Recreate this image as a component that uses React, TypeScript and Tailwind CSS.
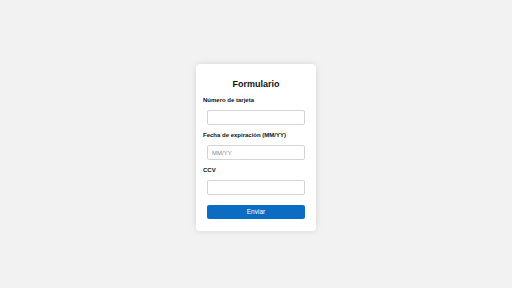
export default function App() {
  return (
    <div className="flex h-[288px] w-full justify-center bg-[#f2f2f2] pt-[64px] font-['Liberation_Sans',Arial,sans-serif]">
      <form
        className="flex h-[167px] w-[120px] flex-col rounded-[4px] bg-white px-[7px] pt-[15px] shadow-[0_0_6px_rgba(0,0,0,0.12)]"
        onSubmit={(e) => e.preventDefault()}
      >
        <h2 className="text-center text-[9px] font-bold leading-[11px] text-[#111]">Formulario</h2>

        <label className="mt-[6px] text-[6px] font-bold leading-[8px] text-[#111]">Número de tarjeta</label>
        <input
          type="text"
          className="ml-[4px] mt-[6px] h-[15px] w-[98px] rounded-[2px] border border-[#d4d4d4] bg-white px-[4px] text-[6px] outline-none"
        />

        <label className="mt-[6px] text-[6px] font-bold leading-[8px] text-[#111]">Fecha de expiración (MM/YY)</label>
        <input
          type="text"
          placeholder="MM/YY"
          className="ml-[4px] mt-[6px] h-[15px] w-[98px] rounded-[2px] border border-[#d4d4d4] bg-white px-[4px] text-[6px] outline-none placeholder:text-[#8a8a8a]"
        />

        <label className="mt-[6px] text-[6px] font-bold leading-[8px] text-[#111]">CCV</label>
        <input
          type="text"
          className="ml-[4px] mt-[6px] h-[15px] w-[98px] rounded-[2px] border border-[#d4d4d4] bg-white px-[4px] text-[6px] outline-none"
        />

        <button
          type="submit"
          className="ml-[4px] mt-[10px] h-[14px] w-[98px] rounded-[2px] bg-[#0b6cc2] text-[6.5px] leading-[14px] text-white"
        >
          Enviar
        </button>
      </form>
    </div>
  );
}
